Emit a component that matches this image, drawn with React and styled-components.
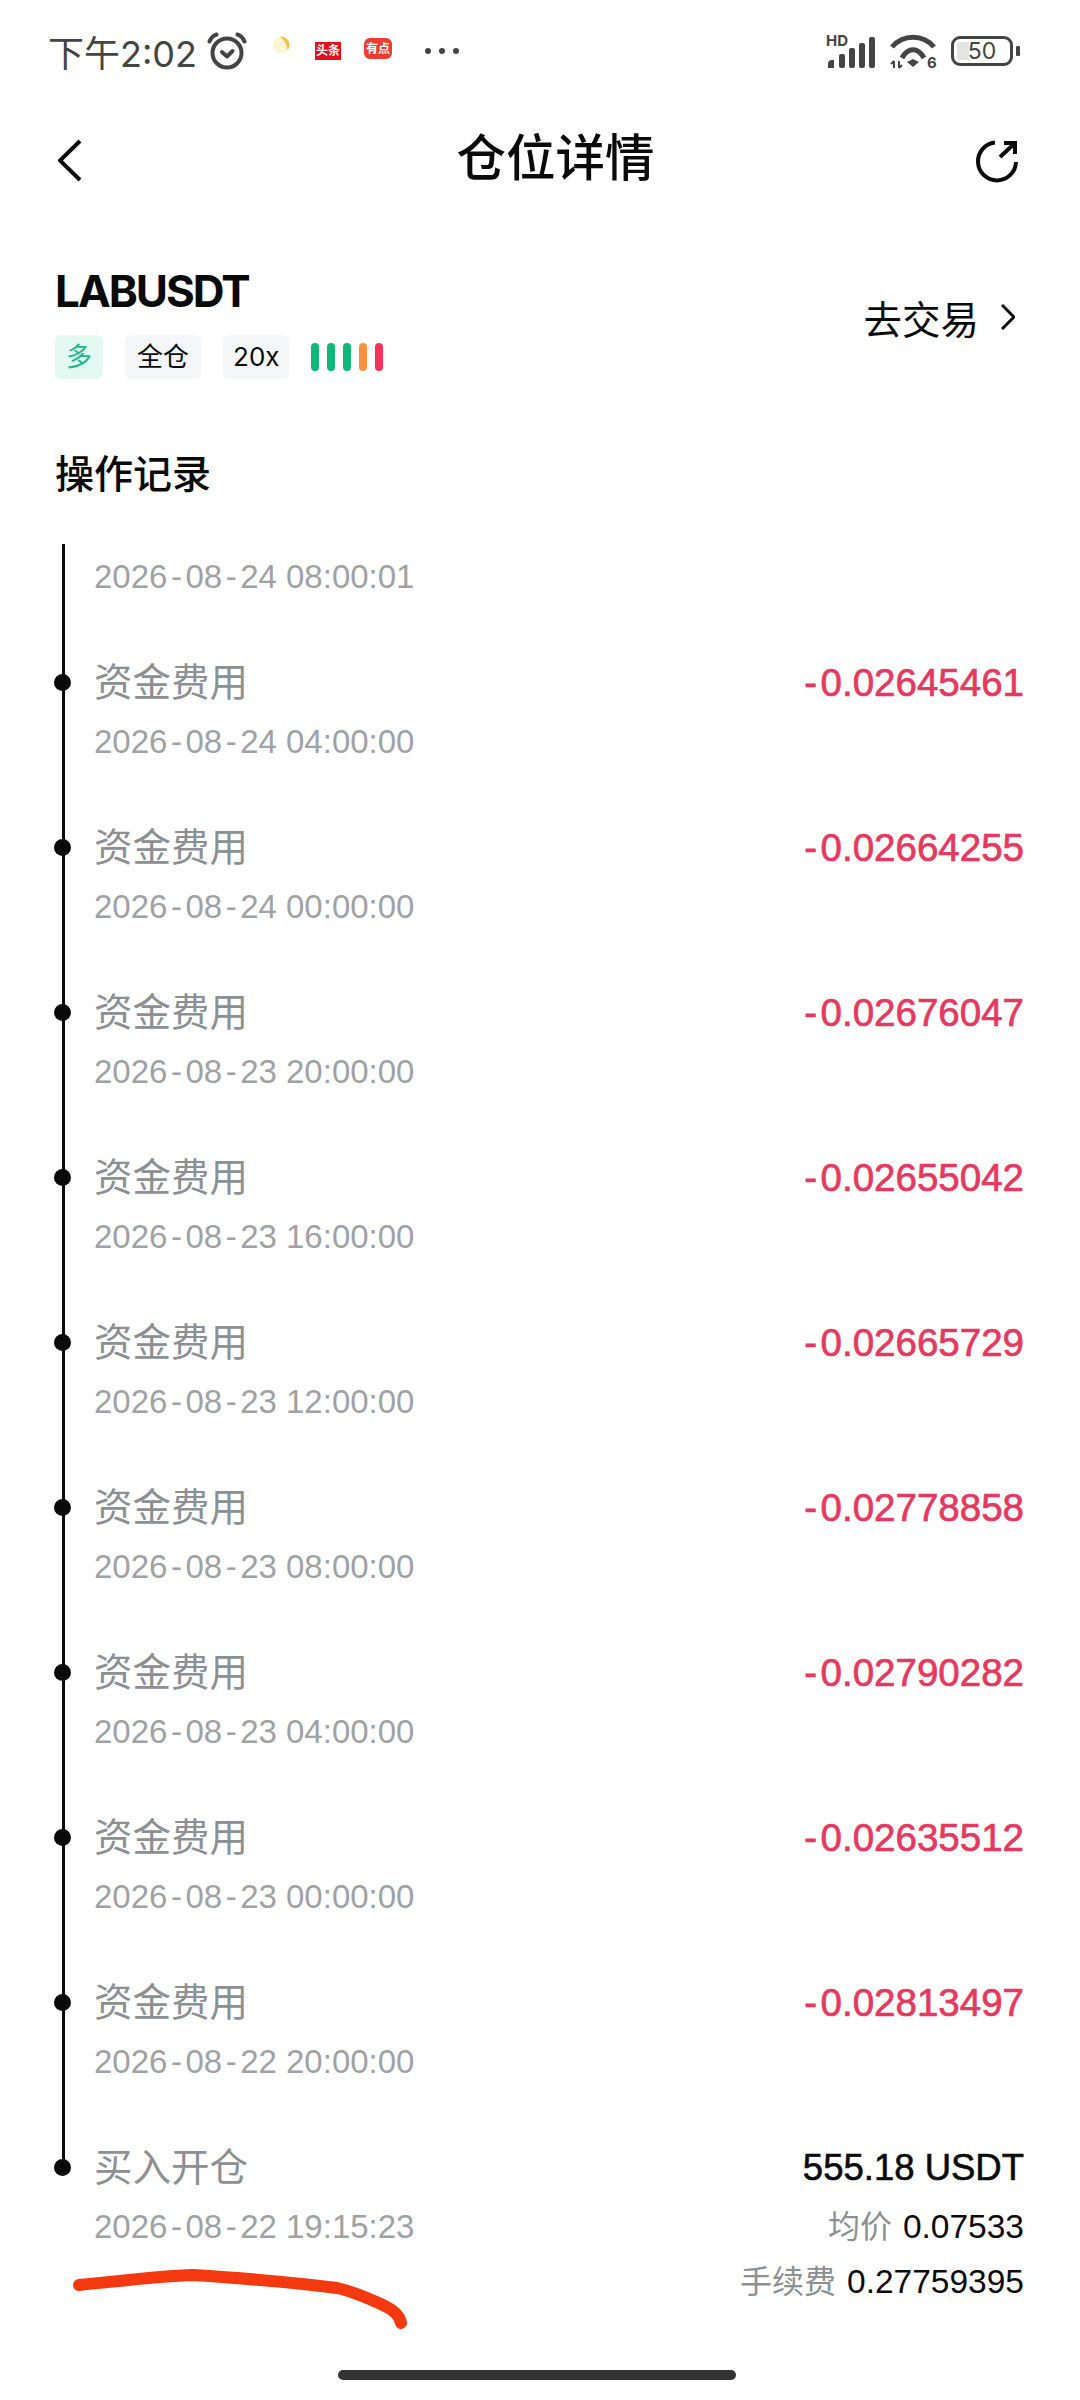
import React from 'react';
import styled, { createGlobalStyle } from 'styled-components';

const FONT = `Inter, "Noto Sans CJK SC", sans-serif`;
const NUM_FONT = `"Liberation Sans", "Noto Sans CJK SC", sans-serif`;

const records = [
  ['2026-08-24 04:00:00', '-0.02645461'],
  ['2026-08-24 00:00:00', '-0.02664255'],
  ['2026-08-23 20:00:00', '-0.02676047'],
  ['2026-08-23 16:00:00', '-0.02655042'],
  ['2026-08-23 12:00:00', '-0.02665729'],
  ['2026-08-23 08:00:00', '-0.02778858'],
  ['2026-08-23 04:00:00', '-0.02790282'],
  ['2026-08-23 00:00:00', '-0.02635512'],
  ['2026-08-22 20:00:00', '-0.02813497'],
];

const GlobalStyle = createGlobalStyle`
  html, body { margin: 0; padding: 0; background: #fff; }
  * { box-sizing: border-box; }
`;

const Page = styled.div`
  position: relative;
  width: 1080px;
  height: 2400px;
  overflow: hidden;
  background: #fff;
  font-family: ${FONT};
  display: flex;
  flex-direction: column;
`;

const StatusBar = styled.div`
  height: 102px;
  padding: 0 60px 0 48px;
  display: flex;
  align-items: center;
  justify-content: space-between;
  color: #444;
`;

const StatusGroup = styled.div`
  display: flex;
  align-items: center;
`;

const Time = styled.span`
  font-size: 36px;
  margin-right: 10px;
`;

const NewsBadge = styled.span`
  width: 26px;
  height: 18px;
  margin-left: 25px;
  background: #e5101a;
  color: #fff;
  font-size: 12px;
  font-weight: 700;
  line-height: 18px;
  text-align: center;
  white-space: nowrap;
`;

const PointBadge = styled.span`
  width: 28px;
  height: 21px;
  margin: -6px 0 0 23px;
  border-radius: 6px;
  background: #ee3b33;
  color: #fff;
  font-size: 12px;
  font-weight: 700;
  line-height: 21px;
  text-align: center;
  white-space: nowrap;
`;

const StatusDots = styled.svg`
  margin-left: 33px;
`;

const Battery = styled.div`
  width: 62px;
  height: 30px;
  margin-left: 14px;
  border: 3px solid #444;
  border-radius: 9px;
  padding: 3px;
`;

const BatteryFill = styled.div`
  height: 100%;
  border-radius: 3px;
  background: linear-gradient(90deg, #e4e4e4 24%, transparent 24%);
  font-size: 23px;
  line-height: 18px;
  text-align: center;
  color: #444;
`;

const BatteryTip = styled.div`
  width: 4px;
  height: 10px;
  margin-left: 3px;
  border-radius: 1px;
  background: #444;
`;

const NavBar = styled.div`
  height: 118px;
  padding: 0 61px 0 58px;
  display: flex;
  align-items: center;
  justify-content: space-between;
`;

const NavTitle = styled.h1`
  margin: -14px 0 0 54px;
  font-size: 49.5px;
  font-weight: 500;
  color: #0a0a0a;
`;

const Header = styled.div`
  padding: 0 65px 0 55px;
  margin-top: 43px;
  display: flex;
  align-items: center;
  justify-content: space-between;
`;

const Symbol = styled.div`
  font-size: 44px;
  font-weight: 700;
  line-height: 56px;
  letter-spacing: -2px;
  color: #0a0a0a;
`;

const TagRow = styled.div`
  margin-top: 16px;
  display: flex;
  align-items: center;
  gap: 22px;
`;

const Tag = styled.span`
  height: 44px;
  padding: 0 ${p => p.$pad}px;
  border-radius: 6px;
  background: ${p => (p.$long ? '#e3f8f0' : '#f5f6f7')};
  color: ${p => (p.$long ? '#1db98a' : '#0a0a0a')};
  font-size: 26px;
  line-height: 44px;
`;

const Risk = styled.div`
  display: flex;
  gap: 8px;
`;

const RiskBar = styled.span`
  width: 8px;
  height: 28px;
  border-radius: 4px;
  background: ${p => p.$color};
`;

const TradeLink = styled.div`
  display: flex;
  align-items: center;
  gap: 22px;
  margin-top: -8px;
  font-size: 38.5px;
  color: #0a0a0a;
`;

const SectionTitle = styled.h2`
  margin: 67px 0 0 55px;
  font-size: 39px;
  line-height: 56px;
  font-weight: 500;
  color: #0a0a0a;
`;

const Timeline = styled.div`
  position: relative;
  margin-top: 42px;
  padding: 0 56px 0 94px;
  font-family: ${NUM_FONT};

  &::before {
    content: '';
    position: absolute;
    left: 62px;
    top: 0;
    bottom: 135px;
    width: 3px;
    background: #0a0a0a;
  }
`;

const FirstRow = styled.div`
  height: 109px;
  padding-top: 4px;
`;

const Row = styled.div`
  position: relative;
  height: 165px;
  display: flex;
  justify-content: space-between;

  &::before {
    content: '';
    position: absolute;
    left: -40px;
    top: 21px;
    width: 17px;
    height: 17px;
    border-radius: 50%;
    background: #0a0a0a;
  }
`;

const RowTitle = styled.div`
  font-size: 38.5px;
  line-height: 60px;
  color: #8c8f93;
`;

const RowDate = styled.div`
  font-size: 33px;
  line-height: 58px;
  color: #9fa2a5;
`;

const Amount = styled.div`
  font-size: 38.5px;
  line-height: 60px;
  -webkit-text-stroke: 0.7px #e5395f;
  color: #e5395f;
`;

const Dash = styled.span`
  padding: 0 ${p => p.$pad}px;
`;

const OpenRight = styled.div`
  text-align: right;
`;

const OpenTotal = styled.div`
  font-size: 36.5px;
  line-height: 60px;
  -webkit-text-stroke: 0.6px #0a0a0a;
  color: #0a0a0a;
`;

const OpenDetail = styled.div`
  font-size: 33.5px;
  line-height: ${p => p.$h}px;
  color: #0a0a0a;

  span {
    font-size: 32px;
    color: #8c8f93;
    margin-right: 11px;
  }
`;

const Scribble = styled.svg`
  position: absolute;
  left: 0;
  top: 2260px;
`;

const HomeBar = styled.div`
  position: absolute;
  left: 338px;
  bottom: 20px;
  width: 398px;
  height: 10px;
  border-radius: 5px;
  background: #333;
`;

// the hyphen in the screenshot is wider than the one in Liberation Sans
const Dashed = ({ text, pad }) =>
  text.split('-').map((part, i) => (
    <React.Fragment key={i}>
      {i > 0 && <Dash $pad={pad}>-</Dash>}
      {part}
    </React.Fragment>
  ));

const Alarm = () => (
  <svg width="40" height="38" viewBox="0 0 40 38" fill="none" stroke="#444" strokeWidth="4" strokeLinecap="round" strokeLinejoin="round">
    <circle cx="20" cy="21" r="14.5" />
    <path d="M15 20l5 4.5 5.5-5.5" />
    <path d="M2.5 9.5C4 6 6.5 3.5 9.500 2.500M37.5 9.5C36 6 33.5 3.500 30.500 2.500" />
  </svg>
);

const Moon = () => (
  <svg width="18" height="18" viewBox="0 0 18 18" style={{ marginLeft: 25, marginTop: -13 }}>
    <circle cx="9" cy="9" r="8.5" fill="#fdf4d8" />
    <path d="M8 0.5C13 0 18 4 17.5 9.5c-.2 2-1 3.500-2 4.500C15 9 12 4 8 .5z" fill="#f5c242" />
  </svg>
);

const Signal = () => (
  <svg width="52" height="42" viewBox="0 -4 52 42" fill="#444">
    <text x="0" y="12" fontFamily="Inter, sans-serif" fontSize="15" fontWeight="700">HD</text>
    <path d="M2 30a4 4 0 0 1 4-4h2v8H2z" />
    <rect x="13" y="20" width="6" height="14" rx="2" />
    <rect x="23" y="14" width="6" height="20" rx="2" />
    <rect x="33" y="9" width="6" height="25" rx="2" />
    <rect x="43" y="3" width="6" height="31" rx="2" />
  </svg>
);

const Wifi = () => (
  <svg width="48" height="44" viewBox="0 -4 48 44" fill="none" stroke="#444" strokeWidth="5" style={{ marginLeft: 11 }}>
    <path d="M3 14C14 1 34 1 45 14" />
    <path d="M13 25C19 14 29 14 35 25" />
    <path d="M18 29l6-3 6 3-6 5z" fill="#444" stroke="none" />
    <path d="M5 35v-7M5 28l-3 3M10 28v7M10 35l3-3" strokeWidth="2" />
    <text x="38" y="35" fontFamily="Inter, sans-serif" fontSize="15" fontWeight="700" fill="#444" stroke="none">6</text>
  </svg>
);

const App = () => (
  <Page>
    <GlobalStyle />
    <StatusBar>
      <StatusGroup>
        <Time>下午2:02</Time>
        <Alarm />
        <Moon />
        <NewsBadge>头条</NewsBadge>
        <PointBadge>有点</PointBadge>
        <StatusDots width="34" height="6" viewBox="0 0 34 6" fill="#444">
          <circle cx="3" cy="3" r="3" />
          <circle cx="17" cy="3" r="3" />
          <circle cx="31" cy="3" r="3" />
        </StatusDots>
      </StatusGroup>
      <StatusGroup>
        <Signal />
        <Wifi />
        <Battery>
          <BatteryFill>50</BatteryFill>
        </Battery>
        <BatteryTip />
      </StatusGroup>
    </StatusBar>

    <NavBar>
      <svg width="24" height="44" viewBox="0 0 24 44" fill="none" stroke="#0a0a0a" strokeWidth="4">
        <path d="M22 2L2 21.500 22 41" />
      </svg>
      <NavTitle>仓位详情</NavTitle>
      <svg width="44" height="44" viewBox="0 0 44 44" fill="none" stroke="#0a0a0a" strokeWidth="4">
        <path d="M20 3.500A19 19 0 1 0 41 23" />
        <path d="M25 18L39 5M29 4h11v11" />
      </svg>
    </NavBar>

    <Header>
      <div>
        <Symbol>LABUSDT</Symbol>
        <TagRow>
          <Tag $long $pad={11}>多</Tag>
          <Tag $pad={12}>全仓</Tag>
          <Tag $pad={10}>20x</Tag>
          <Risk>
            <RiskBar $color="#0fb77b" />
            <RiskBar $color="#0fb77b" />
            <RiskBar $color="#0fb77b" />
            <RiskBar $color="#ff9040" />
            <RiskBar $color="#f6325a" />
          </Risk>
        </TagRow>
      </div>
      <TradeLink>
        去交易
        <svg width="14" height="26" viewBox="0 0 14 26" fill="none" stroke="#0a0a0a" strokeWidth="3">
          <path d="M1 1l12 12L1 25" />
        </svg>
      </TradeLink>
    </Header>

    <SectionTitle>操作记录</SectionTitle>

    <Timeline>
      <FirstRow>
        <RowDate><Dashed text="2026-08-24 08:00:01" pad={3.5} /></RowDate>
      </FirstRow>
      {records.map(([date, amount]) => (
        <Row key={date}>
          <div>
            <RowTitle>资金费用</RowTitle>
            <RowDate><Dashed text={date} pad={3.5} /></RowDate>
          </div>
          <Amount><Dashed text={amount} pad={3.5} /></Amount>
        </Row>
      ))}
      <Row>
        <div>
          <RowTitle>买入开仓</RowTitle>
          <RowDate><Dashed text="2026-08-22 19:15:23" pad={3.5} /></RowDate>
        </div>
        <OpenRight>
          <OpenTotal>555.18 USDT</OpenTotal>
          <OpenDetail $h={58}><span>均价</span>0.07533</OpenDetail>
          <OpenDetail $h={51}><span>手续费</span>0.27759395</OpenDetail>
        </OpenRight>
      </Row>
    </Timeline>

    <Scribble width="420" height="80" viewBox="0 2260 420 80" fill="none" stroke="#f4380f" strokeWidth="12" strokeLinecap="round" strokeLinejoin="round">
      <path d="M79 2285C120 2281 160 2276 193 2275C240 2278 290 2282 337 2288C355 2292 370 2299 385 2306C395 2311 400 2316 401 2323" />
    </Scribble>
    <HomeBar />
  </Page>
);

export default App;
